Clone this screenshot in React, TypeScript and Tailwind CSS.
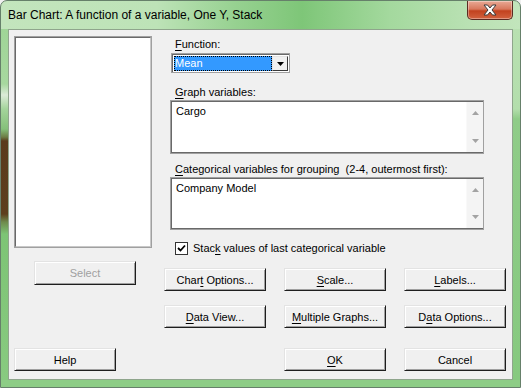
import React from 'react';

const U = ({ children }: { children: React.ReactNode }) => (
    <span className="underline decoration-1 underline-offset-[2px]">{children}</span>
);

interface BtnProps {
    children: React.ReactNode;
    className?: string;
    disabled?: boolean;
}

const Btn: React.FC<BtnProps> = ({ children, className = '', disabled }) => (
    <button
        className={`w-[102px] h-[23px] flex items-center justify-center bg-[#f0f0f0] border border-t-[#e3e3e3] border-l-[#e3e3e3] border-r-[#1e1e1e] border-b-[#1e1e1e] shadow-[inset_1px_1px_0_#ffffff,inset_-1px_-1px_0_#a0a0a0] text-[11px] leading-[14px] ${disabled ? 'text-[#a0a0a0]' : 'text-black'} ${className}`}
    >
        {children}
    </button>
);

const ScrollBar: React.FC = () => (
    <div className="w-[17px] h-full bg-[#f4f4f4] border-l border-[#f9f9f9] flex flex-col items-center justify-between pt-[9px] pb-[9px]">
        <svg width="7" height="4" viewBox="0 0 7 4">
            <path d="M0 4 L3.5 0 L7 4 Z" fill="#a3a3a3" />
        </svg>
        <svg width="7" height="4" viewBox="0 0 7 4">
            <path d="M0 0 L3.5 4 L7 0 Z" fill="#a3a3a3" />
        </svg>
    </div>
);

const VarBox: React.FC<{ text: string; h: string }> = ({ text, h }) => (
    <div className={`ml-[6px] w-[314px] ${h} border border-[#a0a0a0] bg-white flex`}>
        <div className="flex-1 flex border border-[#696969] border-r-0 bg-white">
            <div className="flex-1 pl-[4px] pt-[2px] text-[11px] leading-[14px]">{text}</div>
            <ScrollBar />
        </div>
    </div>
);

export default function App() {
    return (
        <div className="w-[521px] h-[388px] bg-[#f0f0f0] font-['Liberation_Sans',Arial,sans-serif] text-black overflow-hidden">
            <div className="w-[521px] h-[388px] rounded-t-[7px] border border-[#66806a] bg-[linear-gradient(to_right,#c3e5bd_0%,#bde3b7_30%,#97d191_45%,#7ec678_58%,#a4d99e_75%,#b9e1b3_90%,#c2e5bc_100%)] flex flex-col">
                {/* title bar */}
                <div className="h-[29px] flex items-start">
                    <div className="pl-[7px] pt-[7px] text-[12px] leading-[15px] text-black">
                        Bar Chart: A function of a variable, One Y, Stack
                    </div>
                    <div className="flex-1" />
                    <div className="mr-[7px] w-[46px] h-[19px] rounded-b-[5px] border border-t-0 border-[#5a2b22] bg-[linear-gradient(to_bottom,#e9a995_0%,#d8785d_45%,#c2421f_55%,#d2623f_100%)] flex items-center justify-center shadow-[inset_0_0_0_1px_rgba(255,255,255,0.35)]">
                        <svg width="14" height="12" viewBox="0 0 14 12">
                            <path
                                d="M1 1 H4.5 L7 4 L9.5 1 H13 L9 6 L13 11 H9.5 L7 8 L4.5 11 H1 L5 6 Z"
                                fill="#ffffff"
                                stroke="#3b3b3b"
                                strokeWidth="1"
                                strokeLinejoin="round"
                            />
                        </svg>
                    </div>
                </div>

                <div className="flex flex-1">
                    <div className="w-[7px] bg-[linear-gradient(to_bottom,#9fd597_0px,#a7d89f_55px,#dcebd8_66px,#a4d49b_80px,#85c07a_100px,#6d7c45_108px,#5a3b1c_112px,#5d3e1d_185px,#6e8a4c_193px,#7dc475_205px,#88ca80_350px)]" />

                    {/* client area */}
                    <div className="w-[505px] h-[351px] border border-[#8fa58c] bg-[#f0f0f0] flex flex-col">
                        <div className="flex">
                            {/* left column */}
                            <div className="w-[155px] pl-[5px] pt-[6px] flex flex-col">
                                <div className="w-[138px] h-[212px] border border-[#a0a0a0] bg-white">
                                    <div className="w-full h-full border border-[#696969] border-r-[#c8c8c8] border-b-[#c8c8c8] bg-white" />
                                </div>
                                <Btn disabled className="ml-[20px] mt-[13px] !h-[24px]">Select</Btn>
                            </div>

                            {/* right column */}
                            <div className="flex flex-col text-[11px] leading-[14px]">
                                <div className="ml-[11px] mt-[7px]">
                                    <U>F</U>unction:
                                </div>
                                <div className="ml-[7px] mt-[2px] w-[119px] h-[20px] border border-[#a0a0a0] bg-white flex">
                                    <div className="flex-1 flex border border-[#696969] border-r-0 border-b-0 bg-white p-[1px]">
                                        <div className="flex-1 bg-[#3399ff] outline-1 outline-dotted outline-[#000000] -outline-offset-1 text-white pl-[1px] leading-[15px]">
                                            Mean
                                        </div>
                                        <div className="w-[16px] h-full bg-[#f0f0f0] border border-t-[#e3e3e3] border-l-[#e3e3e3] border-r-[#3a3a3a] border-b-[#3a3a3a] flex items-center justify-center">
                                            <svg width="7" height="4" viewBox="0 0 7 4">
                                                <path d="M0 0 L3.5 4 L7 0 Z" fill="#000000" />
                                            </svg>
                                        </div>
                                    </div>
                                </div>

                                <div className="ml-[11px] mt-[12px]">
                                    <U>G</U>raph variables:
                                </div>
                                <div className="mt-[1px]">
                                    <VarBox text="Cargo" h="h-[54px]" />
                                </div>

                                <div className="ml-[11px] mt-[8px] whitespace-pre">
                                    <U>C</U>ategorical variables for grouping  (2-4, outermost first):
                                </div>
                                <div className="mt-[1px]">
                                    <VarBox text="Company Model" h="h-[53px]" />
                                </div>

                                <div className="ml-[11px] mt-[11px] flex items-center gap-[5px] h-[14px]">
                                    <div className="w-[13px] h-[13px] bg-white border border-[#333333] flex items-center justify-center">
                                        <svg width="9" height="9" viewBox="0 0 9 9">
                                            <path d="M1 4 L3.5 6.5 L8 1.5" fill="none" stroke="#000" strokeWidth="1.8" />
                                        </svg>
                                    </div>
                                    <span>
                                        Stac<U>k</U> values of last categorical variable
                                    </span>
                                </div>

                                <div className="mt-[13px] flex gap-[18px]">
                                    <Btn>
                                        Char<U>t</U>&nbsp;Options...
                                    </Btn>
                                    <Btn>
                                        <U>S</U>cale...
                                    </Btn>
                                    <Btn>
                                        <U>L</U>abels...
                                    </Btn>
                                </div>
                                <div className="mt-[14px] flex gap-[18px]">
                                    <Btn>
                                        <U>D</U>ata View...
                                    </Btn>
                                    <Btn>
                                        <U>M</U>ultiple Graphs...
                                    </Btn>
                                    <Btn>
                                        D<U>a</U>ta Options...
                                    </Btn>
                                </div>
                            </div>
                        </div>

                        {/* bottom row */}
                        <div className="mt-[20px] pl-[5px] flex">
                            <Btn>Help</Btn>
                            <div className="w-[168px]" />
                            <div className="flex gap-[18px]">
                                <Btn>
                                    <U>O</U>K
                                </Btn>
                                <Btn>Cancel</Btn>
                            </div>
                        </div>
                    </div>

                    <div className="flex-1 bg-[linear-gradient(to_bottom,#b8e0b1_0px,#b3deac_80px,#8fcc88_90px,#86c97f_350px)]" />
                </div>
                <div className="h-[7px] bg-[#8dcd86]" />
            </div>
        </div>
    );
}
